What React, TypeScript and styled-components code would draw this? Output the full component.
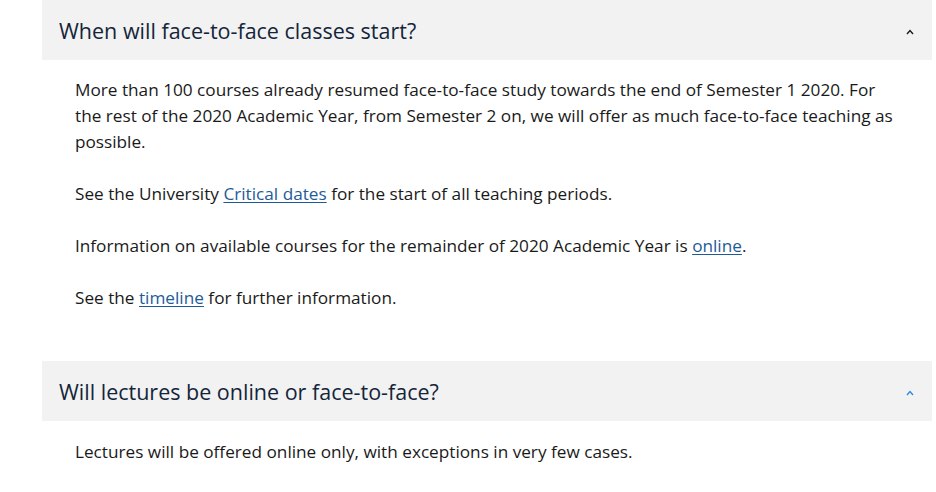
import React from "react";
import styled, { createGlobalStyle } from "styled-components";

const Global = createGlobalStyle`
  html, body { margin: 0; padding: 0; background: #ffffff; }
  body { font-family: "Open Sans", "Noto Sans", sans-serif; }
`;

const Page = styled.div`
  padding: 0 4px 0 42px;
  display: flex;
  flex-direction: column;
`;

const Item = styled.section`
  display: flex;
  flex-direction: column;
`;

const Header = styled.div`
  display: flex;
  align-items: center;
  justify-content: space-between;
  height: 60px;
  background: #f2f2f2;
  padding: 0 18px 0 17px;
`;

const Title = styled.h2`
  margin: 0;
  font-size: 21.5px;
  font-weight: 400;
  color: #14253a;
`;

const Chevron = styled.svg<{ $active?: boolean }>`
  width: 8px;
  height: 6px;
  color: ${(p) => (p.$active ? "#2d8ae6" : "#1a1a1a")};
  margin-top: 3px;
`;

const Body = styled.div<{ $last?: boolean }>`
  padding: ${(p) => (p.$last ? "18px" : "17px")} 32px ${(p) => (p.$last ? "17px" : "24px")} 33px;
`;

const P = styled.p`
  margin: 0 0 26px;
  font-size: 17.2px;
  line-height: 26px;
  color: #1a1a1a;
`;

const A = styled.a`
  color: #1d5c99;
  text-decoration: underline;
  text-underline-offset: 2px;
  text-decoration-thickness: 1px;
`;

const Caret = ({ active }: { active?: boolean }) => (
  <Chevron $active={active} viewBox="0 0 8 6" fill="none">
    <polyline points="1,5 4,1.5 7,5" stroke="currentColor" strokeWidth="1.4" />
  </Chevron>
);

export default function App() {
  return (
    <>
      <Global />
      <Page>
        <Item>
          <Header>
            <Title>When will face-to-face classes start?</Title>
            <Caret />
          </Header>
          <Body>
            <P>
              More than 100 courses already resumed face-to-face study towards the end of
              Semester 1 2020. For the rest of the 2020 Academic Year, from Semester 2 on, we
              will offer as much face-to-face teaching as possible.
            </P>
            <P>
              See the University <A href="#">Critical dates</A> for the start of all teaching
              periods.
            </P>
            <P>
              Information on available courses for the remainder of 2020 Academic Year is{" "}
              <A href="#">online</A>.
            </P>
            <P>
              See the <A href="#">timeline</A> for further information.
            </P>
          </Body>
        </Item>
        <Item>
          <Header>
            <Title>Will lectures be online or face-to-face?</Title>
            <Caret active />
          </Header>
          <Body $last>
            <P>Lectures will be offered online only, with exceptions in very few cases.</P>
          </Body>
        </Item>
      </Page>
    </>
  );
}
